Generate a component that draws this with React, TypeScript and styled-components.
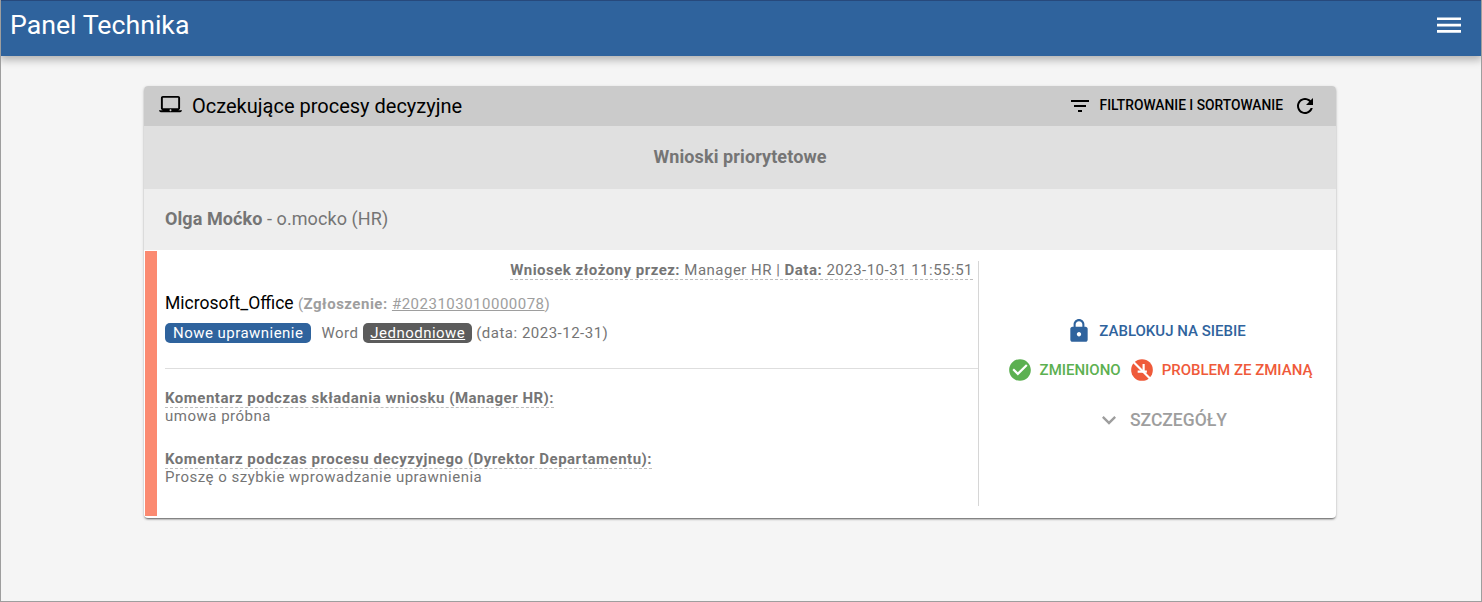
import React from 'react';
import styled, { createGlobalStyle } from 'styled-components';

const Global = createGlobalStyle`
  html, body { margin: 0; padding: 0; height: 100%; }
  body { font-family: Roboto, "Liberation Sans", sans-serif; background: #f5f5f5; }
  #root { height: 100%; }
`;

const Page = styled.div`
  box-sizing: border-box;
  width: 1482px;
  height: 602px;
  border: 1px solid #9e9e9e;
  border-top: none;
  background: #f5f5f5;
  overflow: hidden;
`;
const TopBar = styled.header`
  box-sizing: border-box;
  height: 56px;
  margin: 0 -1px;
  background: #2f639d;
  border-top: 1px solid #27497c;
  display: flex;
  align-items: center;
  justify-content: space-between;
  padding: 0 21px 7px 10px;
  box-shadow: 0 4px 8px rgba(0,0,0,.28);
  color: #fff;
`;
const BrandTitle = styled.h1`
  margin: 0;
  font-size: 26.7px;
  font-weight: 400;
  line-height: 32px;
`;
const Main = styled.main`
  padding: 30px 145px 0 143px;
`;
const Card = styled.section`
  background: #fff;
  border-radius: 4px;
  overflow: hidden;
  box-shadow: 0 2px 2px -1px rgba(0,0,0,.5), 0 1px 3px rgba(0,0,0,.22);
`;
const CardHeader = styled.div`
  box-sizing: border-box;
  height: 40px;
  background: #cbcbcb;
  display: flex;
  align-items: center;
  padding: 0 19px 0 15px;
`;
const LaptopSlot = styled.span`
  display: block;
  margin-bottom: 3px;
`;
const CardTitle = styled.h2`
  margin: 0 0 0 10px;
  font-size: 20px;
  font-weight: 400;
  color: #000;
  flex: 1;
`;
const FilterSlot = styled.span`
  display: block;
  margin-bottom: 1px;
`;
const FilterLabel = styled.span`
  font-size: 13.8px;
  font-weight: 500;
  color: #000;
  margin: 0 10px 2px 8px;
`;
const PriorityBar = styled.div`
  height: 63px;
  background: #e0e0e0;
  color: #757575;
  font-size: 18px;
  letter-spacing: .1px;
  font-weight: 700;
  display: flex;
  align-items: center;
  justify-content: center;
  padding-bottom: 3px;
  box-sizing: border-box;
`;
const UserBar = styled.div`
  box-sizing: border-box;
  height: 61px;
  background: #eeeeee;
  color: #757575;
  font-size: 18px;
  letter-spacing: .08px;
  display: flex;
  align-items: center;
  padding: 0 0 2px 21px;
  b { font-weight: 700; white-space: pre; }
  span { white-space: pre; }
`;
const Item = styled.div`
  display: flex;
  height: 265px;
  margin: 1px 0 2px 1px;
  border-left: 12px solid #fb8a71;
`;
const InfoColumn = styled.div`
  box-sizing: border-box;
  width: 822px;
  margin-top: 10px;
  height: 245px;
  border-right: 1px solid #d6d6d6;
  display: flex;
  flex-direction: column;
`;
const MetaLine = styled.div`
  align-self: flex-end;
  margin-right: 5px;
  font-size: 15px;
  line-height: 18px;
  letter-spacing: .49px;
  color: #757575;
  border-bottom: 1px dashed #bdbdbd;
  b { font-weight: 700; }
`;
const NameLine = styled.div`
  margin: 13px 0 0 8px;
  line-height: 20px;
  font-size: 17.5px;
  color: #000;
  white-space: pre;
`;
const TicketLabel = styled.span`
  font-size: 15px;
  letter-spacing: .5px;
  color: #9e9e9e;
  b { font-weight: 700; }
  a { color: #9e9e9e; text-decoration: underline; }
`;
const TagLine = styled.div`
  margin: 9px 0 0 8px;
  display: flex;
  align-items: center;
  font-size: 15px;
  letter-spacing: .47px;
  color: #757575;
  height: 20px;
`;
const Pill = styled.span<{ $bg: string; $under?: boolean }>`
  background: ${p => p.$bg};
  color: #fff;
  border-radius: 5px;
  padding: 0 ${p => (p.$under ? 7 : 8)}px;
  line-height: 20px;
  height: 20px;
  text-decoration: ${p => (p.$under ? 'underline' : 'none')};
`;
const WordLabel = styled.span`
  margin: 0 5px 0 10px;
`;
const DateLabel = styled.span`
  margin-left: 4px;
  letter-spacing: .5px;
`;
const Divider = styled.hr`
  border: 0;
  border-top: 1px solid #dedede;
  margin: 25px 0 0 8px;
  width: 813px;
`;
const CommentBlock = styled.div<{ $top: number }>`
  margin: ${p => p.$top}px 0 0 8px;
  font-size: 15px;
  letter-spacing: .5px;
  color: #757575;
`;
const CommentTitle = styled.b`
  display: inline-block;
  font-weight: 700;
  border-bottom: 1px dashed #bdbdbd;
  line-height: 18px;
`;
const CommentText = styled.div`
  line-height: 17px;
`;
const ActionColumn = styled.div`
  flex: 1;
  display: flex;
  flex-direction: column;
  align-items: center;
  padding-top: 67px;
  font-weight: 500;
`;
const ActionRow = styled.div<{ $top: number; $shift: number }>`
  display: flex;
  align-items: center;
  height: 26px;
  margin-top: ${p => p.$top}px;
  margin-left: ${p => Math.max(p.$shift, 0)}px;
  margin-right: ${p => Math.max(-p.$shift, 0)}px;
`;
const ActionLabel = styled.span<{ $color: string; $size?: number }>`
  color: ${p => p.$color};
  font-size: ${p => p.$size ?? 15}px;
  margin-left: 7px;
  margin-right: 8px;
  &:last-child { margin-right: 0; }
`;
const Svg = styled.svg`
  display: block;
  flex: none;
`;

const Icon: React.FC<{ size?: number; fill?: string; d: string }> = ({ size = 24, fill = '#000', d }) => (
  <Svg width={size} height={size} viewBox="0 0 24 24" fill={fill}><path d={d} /></Svg>
);

const laptop = 'M20 18c1.1 0 1.99-.9 1.99-2L22 5c0-1.1-.9-2-2-2H4c-1.1 0-2 .9-2 2v11c0 1.1.9 2 2 2H0c0 1.1.9 2 2 2h20c1.1 0 2-.9 2-2h-4zM4 5h16v11H4V5zm8 14c-.55 0-1-.45-1-1s.45-1 1-1 1 .45 1 1-.45 1-1 1z';
const filter = 'M10 18h4v-2h-4v2zM3 6v2h18V6H3zm3 7h12v-2H6v2z';
const refresh = 'M17.65 6.35C16.2 4.9 14.21 4 12 4c-4.42 0-7.99 3.58-7.99 8s3.57 8 7.99 8c3.73 0 6.84-2.55 7.73-6h-2.08c-.82 2.33-3.04 4-5.65 4-3.31 0-6-2.69-6-6s2.69-6 6-6c1.66 0 3.14.69 4.22 1.78L13 11h7V4l-2.35 2.35z';
const lock = 'M18 8h-1V6c0-2.76-2.24-5-5-5S7 3.24 7 6v2H6c-1.1 0-2 .9-2 2v10c0 1.1.9 2 2 2h12c1.1 0 2-.9 2-2V10c0-1.1-.9-2-2-2zm-6 9c-1.1 0-2-.9-2-2s.9-2 2-2 2 .9 2 2-.9 2-2 2zm3.1-9H8.9V6c0-1.71 1.39-3.1 3.1-3.1 1.71 0 3.1 1.39 3.1 3.1v2z';
const check = 'M12 2C6.48 2 2 6.48 2 12s4.48 10 10 10 10-4.48 10-10S17.52 2 12 2zm-2 15l-5-5 1.41-1.41L10 14.17l7.59-7.59L19 8l-9 9z';
const chevron = 'M7.41 8.59L12 13.17l4.59-4.58L18 10l-6 6-6-6 1.41-1.41z';

const ProblemIcon = () => (
  <Svg width={26} height={26} viewBox="0 0 24 24">
    <circle cx="12" cy="12" r="10" fill="#ef5a3a" />
    <path d="M2.5 3 L20.5 21" stroke="#fff" strokeWidth="2" />
    <path d="M13.5 6.5 V13.5 M8 13.5 H16.5" stroke="#fff" strokeWidth="2" fill="none" />
  </Svg>
);

const Burger = () => (
  <Svg width={24} height={24} viewBox="0 0 24 24" fill="#fff">
    <path d="M0 4.4h24v2.7H0zM0 10.7h24v2.7H0zM0 17h24v2.7H0z" />
  </Svg>
);

export default function App() {
  return (
    <Page>
      <Global />
      <TopBar>
        <BrandTitle>Panel Technika</BrandTitle>
        <Burger />
      </TopBar>
      <Main>
        <Card>
          <CardHeader>
            <LaptopSlot><Icon d={laptop} size={23} /></LaptopSlot>
            <CardTitle>Oczekujące procesy decyzyjne</CardTitle>
            <FilterSlot><Icon d={filter} /></FilterSlot>
            <FilterLabel>FILTROWANIE I SORTOWANIE</FilterLabel>
            <FilterSlot><Icon d={refresh} /></FilterSlot>
          </CardHeader>
          <PriorityBar>Wnioski priorytetowe</PriorityBar>
          <UserBar><b>Olga Moćko</b><span> - o.mocko (HR)</span></UserBar>
          <Item>
            <InfoColumn>
              <MetaLine><b>Wniosek złożony przez:</b> Manager HR | <b>Data:</b> 2023-10-31 11:55:51</MetaLine>
              <NameLine>Microsoft_Office <TicketLabel>(<b>Zgłoszenie:</b> <a>#2023103010000078</a>)</TicketLabel></NameLine>
              <TagLine>
                <Pill $bg="#2f639d">Nowe uprawnienie</Pill>
                <WordLabel>Word</WordLabel>
                <Pill $bg="#5c5c5c" $under>Jednodniowe</Pill>
                <DateLabel>(data: 2023-12-31)</DateLabel>
              </TagLine>
              <Divider />
              <CommentBlock $top={20}>
                <CommentTitle>Komentarz podczas składania wniosku (Manager HR):</CommentTitle>
                <CommentText>umowa próbna</CommentText>
              </CommentBlock>
              <CommentBlock $top={25}>
                <CommentTitle>Komentarz podczas procesu decyzyjnego (Dyrektor Departamentu):</CommentTitle>
                <CommentText>Proszę o szybkie wprowadzanie uprawnienia</CommentText>
              </CommentBlock>
            </InfoColumn>
            <ActionColumn>
              <ActionRow $top={0} $shift={-3}>
                <Icon d={lock} fill="#2f639d" size={26} />
                <ActionLabel $color="#2f639d">ZABLOKUJ NA SIEBIE</ActionLabel>
              </ActionRow>
              <ActionRow $top={13} $shift={4}>
                <Icon d={check} fill="#5cb051" size={26} />
                <ActionLabel $color="#5cb051">ZMIENIONO</ActionLabel>
                <ProblemIcon />
                <ActionLabel $color="#ef5a3a">PROBLEM ZE ZMIANĄ</ActionLabel>
              </ActionRow>
              <ActionRow $top={24} $shift={7}>
                <Icon d={chevron} fill="#9e9e9e" size={28} />
                <ActionLabel $color="#9e9e9e" $size={17.5}>SZCZEGÓŁY</ActionLabel>
              </ActionRow>
            </ActionColumn>
          </Item>
        </Card>
      </Main>
    </Page>
  );
}
